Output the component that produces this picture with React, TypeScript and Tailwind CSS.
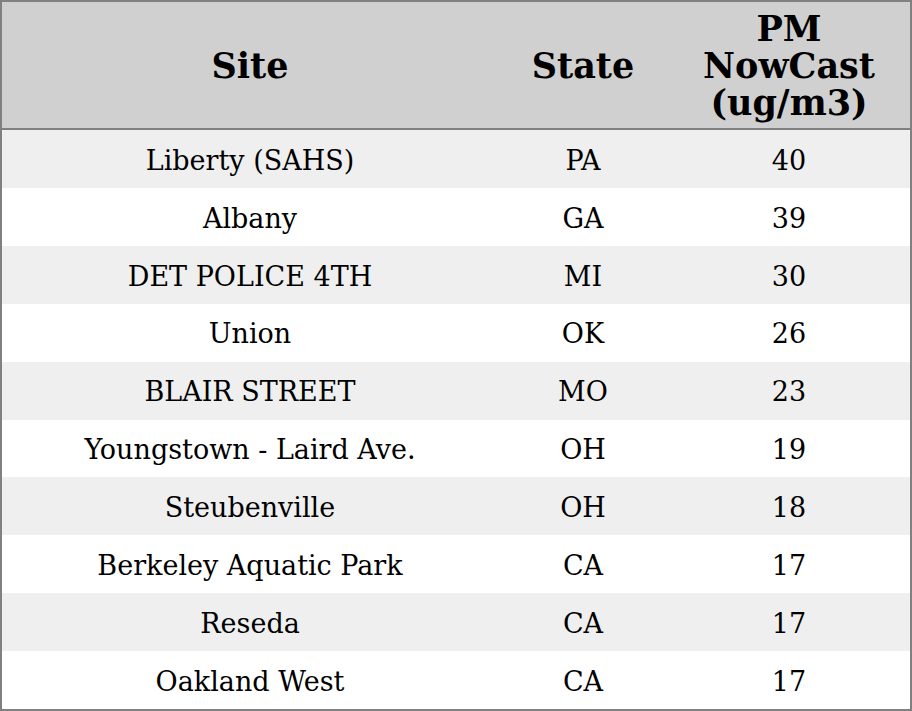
import React from "react";

const rows: [string, string, string][] = [
  ["Liberty (SAHS)", "PA", "40"],
  ["Albany", "GA", "39"],
  ["DET POLICE 4TH", "MI", "30"],
  ["Union", "OK", "26"],
  ["BLAIR STREET", "MO", "23"],
  ["Youngstown - Laird Ave.", "OH", "19"],
  ["Steubenville", "OH", "18"],
  ["Berkeley Aquatic Park", "CA", "17"],
  ["Reseda", "CA", "17"],
  ["Oakland West", "CA", "17"],
];

export default function App() {
  return (
    <div
      className="w-[912px] h-[711px] bg-white"
      style={{ fontFamily: '"DejaVu Serif", serif' }}
    >
      <div className="w-[912px] h-[711px] border-2 border-[#808080] flex flex-col text-black">
        <div className="grid grid-cols-[496px_170px_242px] h-[128px] bg-[#d0d0d0] border-b-2 border-[#808080] font-bold text-[35px] leading-[37px]">
          <div className="flex items-center justify-center">Site</div>
          <div className="flex items-center justify-center">State</div>
          <div className="flex items-center justify-center text-center">
            PM
            <br />
            NowCast
            <br />
            (ug/m3)
          </div>
        </div>
        <div className="flex flex-col flex-1 text-[27px]">
          {rows.map((r, i) => (
            <div
              key={i}
              className={
                "grid grid-cols-[496px_170px_242px] flex-1 items-center pt-1 " +
                (i % 2 === 0 ? "bg-[#efefef]" : "bg-white")
              }
            >
              <div className="text-center">{r[0]}</div>
              <div className="text-center">{r[1]}</div>
              <div className="text-center">{r[2]}</div>
            </div>
          ))}
        </div>
      </div>
    </div>
  );
}
